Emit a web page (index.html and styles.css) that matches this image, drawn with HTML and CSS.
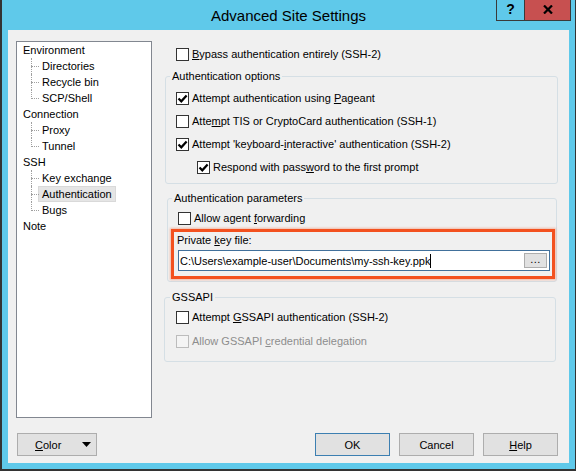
FILE: index.html
```html
<!DOCTYPE html>
<html>
<head>
<meta charset="utf-8">
<link rel="stylesheet" href="styles.css">
</head>
<body>
<div class="window">
  <div class="titlebar">
    <div></div>
    <div class="title">Advanced Site Settings</div>
    <div class="tb-buttons">
      <div class="tb-help">?</div>
      <div class="tb-close"><svg width="10" height="9" viewBox="0 0 10 9"><path d="M1 0.5 L9 8.5 M9 0.5 L1 8.5" stroke="#000" stroke-width="2.2"/></svg></div>
    </div>
  </div>
  <div class="client">
    <div class="main">
      <div class="tree">
        <div class="node root"><span class="lbl">Environment</span></div>
        <div class="kids">
          <div class="kid"><span class="lbl">Directories</span></div>
          <div class="kid"><span class="lbl">Recycle bin</span></div>
          <div class="kid"><span class="lbl">SCP/Shell</span></div>
        </div>
        <div class="node root"><span class="lbl">Connection</span></div>
        <div class="kids">
          <div class="kid"><span class="lbl">Proxy</span></div>
          <div class="kid"><span class="lbl">Tunnel</span></div>
        </div>
        <div class="node root"><span class="lbl">SSH</span></div>
        <div class="kids">
          <div class="kid"><span class="lbl">Key exchange</span></div>
          <div class="kid sel"><span class="lbl">Authentication</span></div>
          <div class="kid"><span class="lbl">Bugs</span></div>
        </div>
        <div class="node root"><span class="lbl">Note</span></div>
      </div>

      <div class="panel">
        <div class="row bypass"><span class="cb"></span><span><u>B</u>ypass authentication entirely (SSH-2)</span></div>

        <fieldset class="group g1">
          <legend>Authentication options</legend>
          <div class="gbody">
            <div class="row"><span class="cb on"><svg width="11" height="11" viewBox="0 0 11 11"><path d="M1.5 5.5 L4.3 8.3 L9.6 2.4" fill="none" stroke="#000" stroke-width="2.2"/></svg></span><span>Attempt authentication using <u>P</u>ageant</span></div>
            <div class="row"><span class="cb"></span><span>Atte<u>m</u>pt TIS or CryptoCard authentication (SSH-1)</span></div>
            <div class="row"><span class="cb on"><svg width="11" height="11" viewBox="0 0 11 11"><path d="M1.5 5.5 L4.3 8.3 L9.6 2.4" fill="none" stroke="#000" stroke-width="2.2"/></svg></span><span>Attempt 'keyboard-<u>i</u>nteractive' authentication (SSH-2)</span></div>
            <div class="row indent"><span class="cb on"><svg width="11" height="11" viewBox="0 0 11 11"><path d="M1.5 5.5 L4.3 8.3 L9.6 2.4" fill="none" stroke="#000" stroke-width="2.2"/></svg></span><span>Respond with pass<u>w</u>ord to the first prompt</span></div>
          </div>
        </fieldset>

        <fieldset class="group g2">
          <legend>Authentication parameters</legend>
          <div class="gbody">
            <div class="row"><span class="cb"></span><span>Allow agent <u>f</u>orwarding</span></div>
            <div class="highlight">
              <div class="keylabel">Private <u>k</u>ey file:</div>
              <div class="edit">
                <span class="edit-text">C:\Users\example-user\Documents\my-ssh-key.ppk</span><span class="caret"></span>
                <span class="browse">...</span>
              </div>
            </div>
          </div>
        </fieldset>

        <fieldset class="group g3">
          <legend>GSSAPI</legend>
          <div class="gbody">
            <div class="row"><span class="cb"></span><span>Attempt <u>G</u>SSAPI authentication (SSH-2)</span></div>
            <div class="row disabled"><span class="cb"></span><span>Allow GSSAPI <u>c</u>redential delegation</span></div>
          </div>
        </fieldset>
      </div>
    </div>

    <div class="footer">
      <div class="btn color"><span><u>C</u>olor</span><svg class="tri" width="9" height="5" viewBox="0 0 9 5"><path d="M0 0 H9 L4.5 5 Z" fill="#000"/></svg></div>
      <div class="btn ok">OK</div>
      <div class="btn">Cancel</div>
      <div class="btn"><u>H</u>elp</div>
    </div>
  </div>
</div>
</body>
</html>
```
FILE: styles.css
```css
* { box-sizing: border-box; }
html, body { margin: 0; padding: 0; }
body {
  width: 576px;
  height: 471px;
  overflow: hidden;
  font-family: "Liberation Sans", Arial, sans-serif;
  font-size: 11px;
  color: #000;
}
u { text-decoration: underline; text-underline-offset: 1px; }

.window {
  width: 576px;
  height: 471px;
  background: #5fc9ea;
  border-left: 2px solid #333;
  border-right: 1px solid #333;
  border-bottom: 2px solid #333;
  display: flex;
  flex-direction: column;
}

.titlebar {
  height: 30px;
  display: grid;
  grid-template-columns: 1fr auto 1fr;
  flex: none;
}
.title {
  font-size: 15px;
  line-height: 30px;
  padding-top: 1px;
  color: #000;
  white-space: nowrap;
}
.tb-buttons {
  justify-self: end;
  align-self: start;
  margin-right: 4px;
  display: flex;
  height: 21px;
  border: 1px solid #3a3a3a;
  border-top: none;
}
.tb-help {
  width: 28px;
  border-right: 1px solid #3a3a3a;
  font-weight: bold;
  font-size: 14px;
  line-height: 19px;
  text-align: center;
}
.tb-close {
  width: 45px;
  background: #c75050;
  display: flex;
  align-items: center;
  justify-content: center;
  padding-bottom: 1px;
}

.client {
  height: 433px;
  flex: none;
  margin: 0 6px;
  background: #f0f0f0;
  padding: 11px 11px 7px 8px;
  display: flex;
  flex-direction: column;
}
.main {
  height: 377px;
  display: flex;
}

/* tree */
.tree {
  width: 136px;
  height: 377px;
  background: #fff;
  border: 1px solid #828790;
  flex: none;
}
.node, .kid {
  height: 16px;
  line-height: 14px;
  white-space: nowrap;
}
.lbl {
  display: inline-block;
  height: 16px;
  line-height: 14px;
  border: 1px solid transparent;
  padding: 0 3px;
}
.root .lbl { margin-left: 2px; }
.kids { margin-left: 14px; }
.kid {
  position: relative;
  padding-left: 7px;
}
.kid::before {
  content: "";
  position: absolute;
  left: 0;
  top: 8px;
  width: 8px;
  border-top: 1px dotted #a0a0a0;
}
.kid::after {
  content: "";
  position: absolute;
  left: 0;
  top: 0;
  height: 16px;
  border-left: 1px dotted #a0a0a0;
}
.kid:last-child::after { height: 9px; }
.sel .lbl {
  background: #e5e5e5;
  border-color: #d9d9d9;
}

/* right panel */
.panel {
  width: 393px;
  margin-left: 13px;
  padding-top: 2px;
  display: flex;
  flex-direction: column;
}
.row {
  height: 22px;
  display: flex;
  align-items: center;
  white-space: nowrap;
}
.bypass { padding-left: 11px; }
.cb {
  width: 13px;
  height: 13px;
  border: 1px solid #333;
  background: #fff;
  margin-right: 3px;
  flex: none;
  display: flex;
  align-items: center;
  justify-content: center;
}
.disabled { color: #8d8d8d; }
.disabled .cb { border-color: #bcbcbc; background: #f4f4f4; }

.group {
  margin: 0;
  padding: 0;
  min-width: 0;
  border: 1px solid #d5dfe5;
  border-radius: 3px;
}
.group legend {
  padding: 0 2px;
  margin-left: 4px;
  line-height: 14px;
  height: 14px;
}
.g1 { margin-top: 4px; }
.g1 .gbody {
  padding: 4px 0 5px 10px;
  display: flex;
  flex-direction: column;
  gap: 1px;
}
.indent { padding-left: 21px; }

.g2 { margin: 7px 1px 0 2px; }
.g2 .gbody { padding: 2px 1px 2px 0; }
.g2 .row { padding-left: 10px; }
.highlight {
  margin-left: 3px;
  border: 3px solid #f3511f;
  box-shadow: 0 0 2px 1px rgba(243, 81, 31, 0.35);
  padding: 1px 2px 5px 3px;
}
.keylabel { line-height: 14px; height: 14px; }
.edit {
  margin-top: 3px;
  margin-left: 1px;
  height: 21px;
  background: #fff;
  border: 1px solid #41709b;
  display: flex;
  align-items: center;
  padding-left: 1px;
}
.edit-text { white-space: nowrap; }
.caret {
  width: 1px;
  height: 14px;
  background: #000;
}
.browse {
  margin-left: auto;
  margin-right: 2px;
  width: 23px;
  height: 15px;
  background: #e1e1e1;
  border: 1px solid #adadad;
  font-size: 11px;
  line-height: 11px;
  text-align: center;
  letter-spacing: 0.5px;
}

.g3 { margin: 8px 2px 0 -1px; }
.g3 legend { margin-left: 5px; }
.g3 .gbody {
  padding: 2px 0 9px 11px;
  display: flex;
  flex-direction: column;
  gap: 2px;
}

/* footer */
.footer {
  margin-top: 15px;
  height: 23px;
  display: flex;
}
.btn {
  width: 75px;
  height: 23px;
  background: #e1e1e1;
  border: 1px solid #adadad;
  display: flex;
  align-items: center;
  justify-content: center;
  margin-left: 9px;
  white-space: nowrap;
}
.btn.color {
  width: 80px;
  margin-left: 1px;
  justify-content: flex-start;
  padding-left: 17px;
}
.tri { margin-left: auto; margin-right: 5px; }
.btn.ok { margin-left: auto; border-color: #3c7fb1; }
```
